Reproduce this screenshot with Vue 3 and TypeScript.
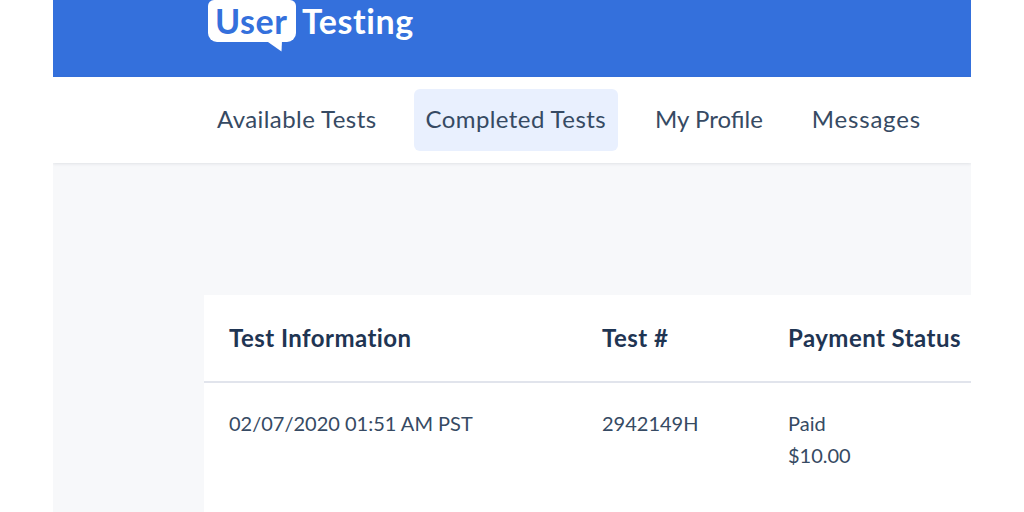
<script setup lang="ts">
const navItems = [
  { label: 'Available Tests', active: false },
  { label: 'Completed Tests', active: true },
  { label: 'My Profile', active: false },
  { label: 'Messages', active: false },
]
</script>

<template>
  <div class="frame">
    <header class="topbar">
      <div class="logo">
        <div class="bubble">
          <span class="user">User</span>
          <svg class="tail" width="16" height="11" viewBox="0 0 16 11"><path d="M0 0H15L14.5 10.5 1 1Z" fill="#fff" /></svg>
        </div>
        <span class="testing">Testing</span>
      </div>
    </header>
    <nav class="nav">
      <a v-for="item in navItems" :key="item.label" class="nav-item" :class="{ active: item.active }">{{ item.label }}</a>
    </nav>
    <main class="content">
      <section class="card">
        <div class="row head">
          <div>Test Information</div>
          <div>Test #</div>
          <div>Payment Status</div>
        </div>
        <div class="row body">
          <div>02/07/2020 01:51 AM PST</div>
          <div>2942149H</div>
          <div>Paid<br />$10.00</div>
        </div>
      </section>
    </main>
  </div>
</template>

<style>
html, body { margin: 0; background: #fff; }
</style>

<style scoped>
.frame {
  width: 918px;
  height: 512px;
  margin-left: 53px;
  overflow: hidden;
  font-family: Lato, sans-serif;
  color: #364a63;
  background: #f7f8fa;
}
.topbar {
  height: 77px;
  background: #3470dc;
  padding-left: 155px;
  box-sizing: border-box;
  overflow: hidden;
}
.logo {
  display: flex;
  align-items: flex-start;
  gap: 6px;
  color: #fff;
  font-family: Lato, sans-serif;
  font-weight: 700;
  font-size: 34px;
  letter-spacing: 0.55px;
  line-height: 42px;
}
.bubble {
  position: relative;
  width: 88px;
  height: 42px;
  background: #fff;
  border-radius: 6px 6px 9px 9px;
  box-sizing: border-box;
  padding-left: 7px;
  color: #3470dc;
}
.user, .testing { display: block; }
.tail { position: absolute; left: 59px; top: 41px; }
.nav {
  height: 86px;
  background: #fff;
  box-shadow: 0 1px 3px rgba(30, 40, 60, 0.1);
  display: flex;
  align-items: center;
  gap: 25px;
  padding-left: 152px;
  box-sizing: border-box;
  position: relative;
}
.nav-item {
  height: 62px;
  line-height: 60px;
  padding: 0 12px;
  border-radius: 6px;
  font-size: 24px;
  letter-spacing: 0.42px;
  white-space: nowrap;
}
.nav-item:nth-child(3) { letter-spacing: 0; }
.nav-item:nth-child(4) { letter-spacing: 0.8px; }
.nav-item.active { background: #e9f0fe; }
.content {
  padding: 132px 0 0 151px;
}
.card {
  background: #fff;
  height: 300px;
}
.row {
  display: grid;
  grid-template-columns: 373px 186px 1fr;
  padding-left: 25px;
  white-space: nowrap;
}
.head {
  height: 88px;
  padding-bottom: 2px;
  align-items: center;
  box-sizing: border-box;
  border-bottom: 2px solid #e1e4ec;
  font-size: 24px;
  font-weight: 700;
  letter-spacing: 0.45px;
  color: #1f3553;
}
.body {
  padding-top: 24px;
  font-size: 20px;
  line-height: 32px;
}
</style>
